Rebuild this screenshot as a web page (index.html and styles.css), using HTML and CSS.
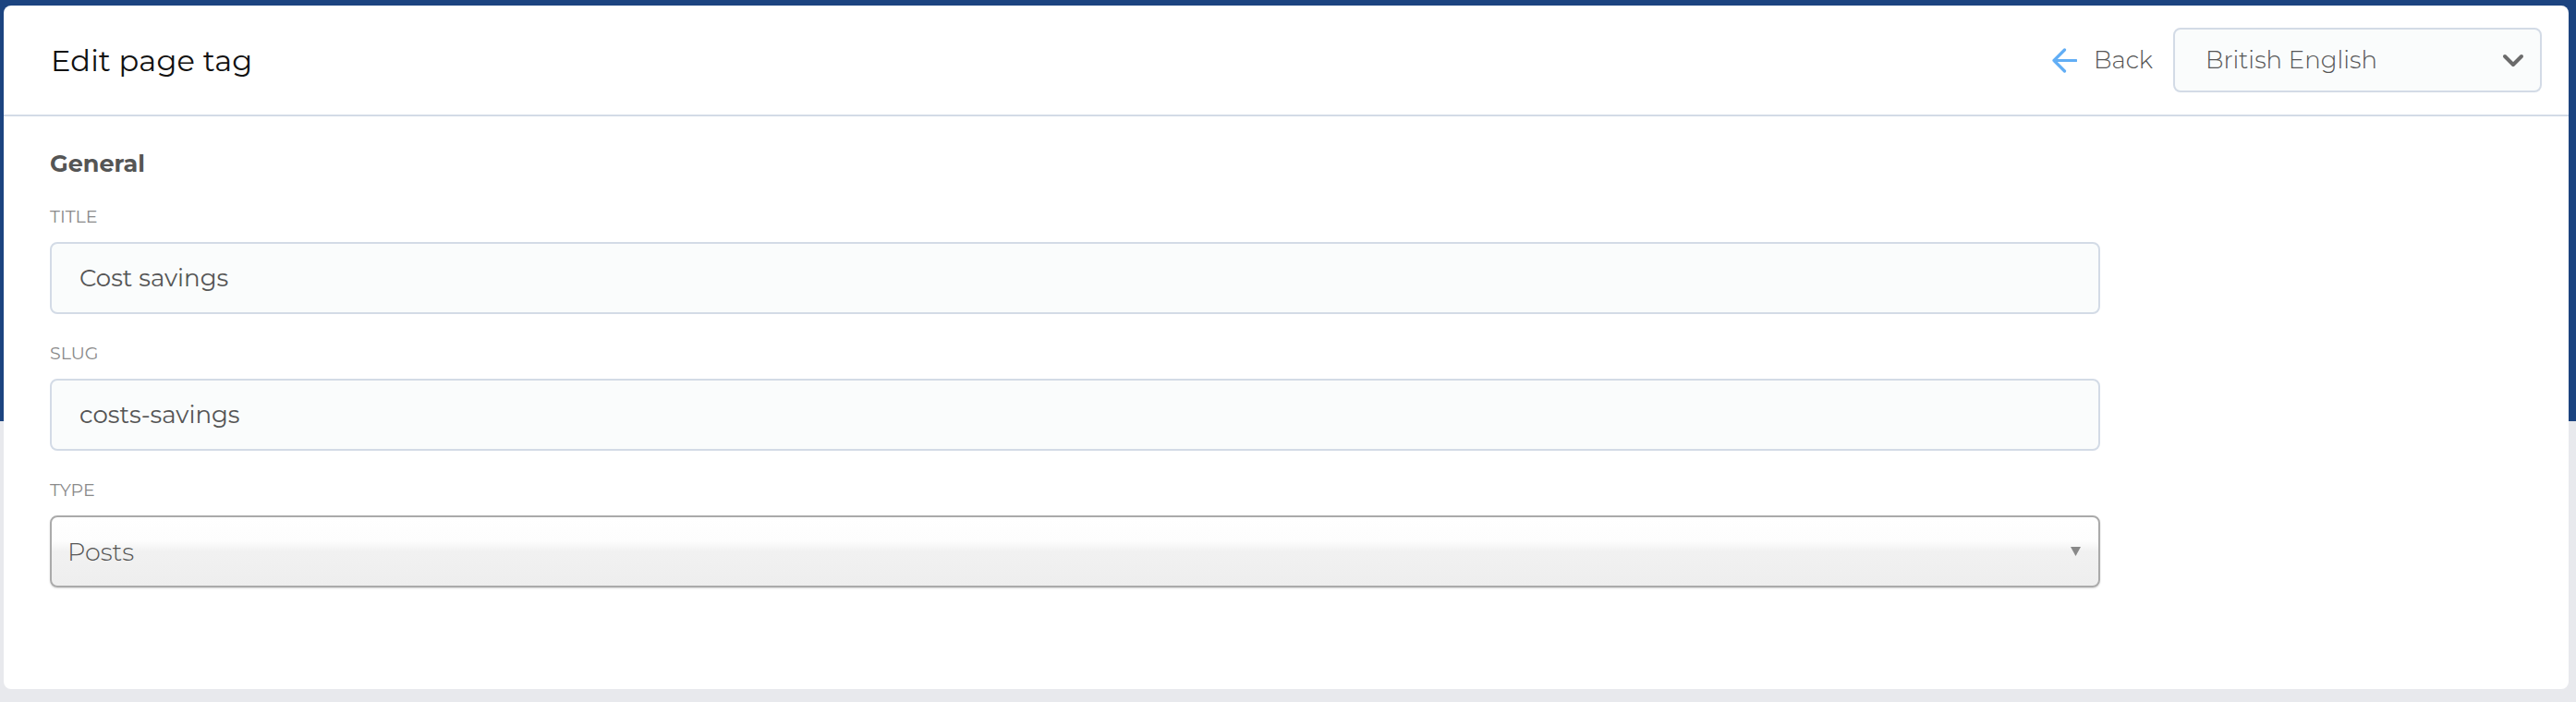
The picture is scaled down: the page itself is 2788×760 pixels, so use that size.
FILE: index.html
```html
<!DOCTYPE html>
<html lang="en">
<head>
<meta charset="utf-8">
<title>Edit page tag</title>
<link rel="stylesheet" href="styles.css">
</head>
<body>
<div class="card">
  <header class="card-header">
    <h1 class="page-title">Edit page tag</h1>
    <div class="header-actions">
      <a class="back-link" href="#">
        <svg class="back-icon" width="28" height="27" viewBox="0 0 28 27" aria-hidden="true">
          <path d="M27 13.5 H3 M14.5 2 L3 13.5 L14.5 25" fill="none" stroke="#62aef5" stroke-width="3.2" stroke-linecap="round" stroke-linejoin="round"/>
        </svg>
        <span>Back</span>
      </a>
      <div class="lang-select">
        <span>British English</span>
        <svg class="chevron" width="24" height="15" viewBox="0 0 24 15" aria-hidden="true">
          <path d="M3 3 L12 12 L21 3" fill="none" stroke="#6b6b6b" stroke-width="4" stroke-linecap="round" stroke-linejoin="round"/>
        </svg>
      </div>
    </div>
  </header>
  <section class="card-body">
    <h2 class="section-title">General</h2>
    <div class="field">
      <label class="field-label">Title</label>
      <div class="text-input">Cost savings</div>
    </div>
    <div class="field">
      <label class="field-label">Slug</label>
      <div class="text-input">costs-savings</div>
    </div>
    <div class="field">
      <label class="field-label">Type</label>
      <div class="native-select">
        <span>Posts</span>
        <svg class="triangle" width="11" height="10" viewBox="0 0 11 10" aria-hidden="true">
          <path d="M0 0 H11 L5.5 10 Z" fill="#888888"/>
        </svg>
      </div>
    </div>
  </section>
</div>
</body>
</html>
```
FILE: styles.css
```css
* { box-sizing: border-box; }

html, body {
  margin: 0;
  padding: 0;
}

body {
  width: 2788px;
  height: 760px;
  overflow: hidden;
  background: linear-gradient(to bottom, #1c4480 0, #1c4480 456px, #e8e9ed 456px, #e8e9ed 100%);
  font-family: "Montserrat", Inter, "Noto Sans", sans-serif;
  color: #555555;
  padding: 6px 8px 0 4px;
}

.card {
  background: #ffffff;
  border-radius: 8px;
  height: 740px;
  display: flex;
  flex-direction: column;
}

.card-header {
  height: 120px;
  border-bottom: 2px solid #d3dbe6;
  display: flex;
  align-items: center;
  justify-content: space-between;
  padding: 0 29px 0 51px;
}

.page-title {
  margin: 0;
  font-size: 32px;
  font-weight: 400;
  color: #111111;
  letter-spacing: 0.2px;
}

.header-actions {
  display: flex;
  align-items: center;
  gap: 22px;
}

.back-link {
  display: flex;
  align-items: center;
  gap: 18px;
  text-decoration: none;
  color: #555555;
  font-size: 26px;
  font-weight: 300;
}

.back-icon { display: block; }

.lang-select {
  width: 399px;
  height: 70px;
  border: 2px solid #d3dbe6;
  border-radius: 8px;
  background: #fafcfc;
  display: flex;
  align-items: center;
  justify-content: space-between;
  padding: 0 17px 0 33px;
  font-size: 26px;
  font-weight: 300;
  color: #555555;
}

.chevron { display: block; }

.card-body {
  padding: 36px 0 0 50px;
  width: 2269px;
}

.section-title {
  margin: 0 0 32px 0;
  font-size: 25.5px;
  font-weight: 700;
  color: #555555;
  line-height: 30px;
}

.field {
  display: flex;
  flex-direction: column;
  margin-bottom: 32px;
}

.field-label {
  text-transform: uppercase;
  font-size: 19px;
  color: #8a8a8a;
  line-height: 22px;
  margin-bottom: 16px;
  font-weight: 400;
}

.text-input {
  height: 78px;
  border: 2px solid #d3dbe6;
  border-radius: 8px;
  background: #fafcfc;
  display: flex;
  align-items: center;
  padding: 0 30px;
  font-size: 26px;
  color: #555555;
}

.native-select {
  height: 78px;
  border: 2px solid #aaaaaa;
  border-radius: 8px;
  background: linear-gradient(to bottom, #ffffff 0%, #fdfdfd 35%, #f1f1f1 50%, #eeeeee 100%);
  box-shadow: 0 1px 2px rgba(0, 0, 0, 0.15);
  display: flex;
  align-items: center;
  justify-content: space-between;
  padding: 0 19px 0 17px;
  font-size: 27px;
  font-weight: 300;
  color: #555555;
}

.triangle { display: block; }
```
